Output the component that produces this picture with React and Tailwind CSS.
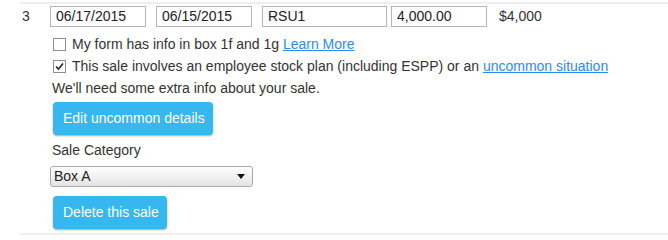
import React from "react";

function Check({ checked }) {
  return (
    <span className="inline-flex w-[13px] h-[13px] border border-[#8f8f8f] bg-white items-center justify-center shrink-0">
      {checked && (
        <svg width="9" height="9" viewBox="0 0 9 9">
          <path d="M1 4.5 L3.5 7 L8 1.5" stroke="#222" strokeWidth="1.6" fill="none" />
        </svg>
      )}
    </span>
  );
}

export default function App() {
  return (
    <div className="w-[668px] h-[236px] bg-white pt-[2px] pl-[20px] text-[14px] text-[#333]" style={{ fontFamily: '"Liberation Sans", Arial, sans-serif' }}>
      <div className="flex border-t-2 border-b-2 border-[#eeeeee] h-[233px]">
        <div className="w-[30px] pl-[2px] pt-[2px] leading-[21px]">3</div>
        <div className="flex flex-col">
          <div className="flex items-center mt-[2px] h-[21px]">
            <div className="w-[96px] h-[21px] border border-[#b5b5b5] px-[5px] leading-[19px] text-[#222]">06/17/2015</div>
            <div className="w-[96px] h-[21px] border border-[#b5b5b5] px-[5px] leading-[19px] ml-[10px] text-[#222]">06/15/2015</div>
            <div className="w-[125px] h-[21px] border border-[#b5b5b5] px-[5px] leading-[19px] ml-[10px] text-[#222]">RSU1</div>
            <div className="w-[96px] h-[21px] border border-[#b5b5b5] px-[5px] leading-[19px] ml-[4px] text-[#222]">4,000.00</div>
            <div className="ml-[12px]">$4,000</div>
          </div>
          <div className="flex items-center mt-[6px] h-[22px] pl-[3px]">
            <Check />
            <span className="ml-[6px]">My form has info in box 1f and 1g <a className="text-[#2b8cf0] underline">Learn More</a></span>
          </div>
          <div className="flex items-center h-[22px] pl-[3px]">
            <Check checked />
            <span className="ml-[6px]">This sale involves an employee stock plan (including ESPP) or an <a className="text-[#2b8cf0] underline">uncommon situation</a></span>
          </div>
          <div className="h-[22px] leading-[22px] pl-[2px]">We'll need some extra info about your sale.</div>
          <button className="mt-[3px] ml-[3px] w-[160px] h-[33px] bg-[#36b7f0] text-white rounded-[4px] shadow-[0_1px_2px_rgba(0,0,0,0.35)] text-[14px] text-left pl-[10px]">Edit uncommon details</button>
          <div className="mt-[4px] h-[22px] leading-[22px] pl-[2px]">Sale Category</div>
          <div className="mt-[5px] w-[203px] h-[21px] border border-[#aaaaaa] rounded-[3px] bg-gradient-to-b from-white to-[#e3e3e3] flex items-center justify-between pl-[3px] pr-[7px] text-[#222]">
            <span className="leading-[19px]">Box A</span>
            <svg width="8" height="5" viewBox="0 0 8 5"><path d="M0 0 L8 0 L4 5 Z" fill="#111" /></svg>
          </div>
          <button className="mt-[9px] ml-[3px] w-[114px] h-[33px] bg-[#36b7f0] text-white rounded-[4px] shadow-[0_1px_2px_rgba(0,0,0,0.35)] text-[14px] text-left pl-[10px]">Delete this sale</button>
        </div>
      </div>
    </div>
  );
}
